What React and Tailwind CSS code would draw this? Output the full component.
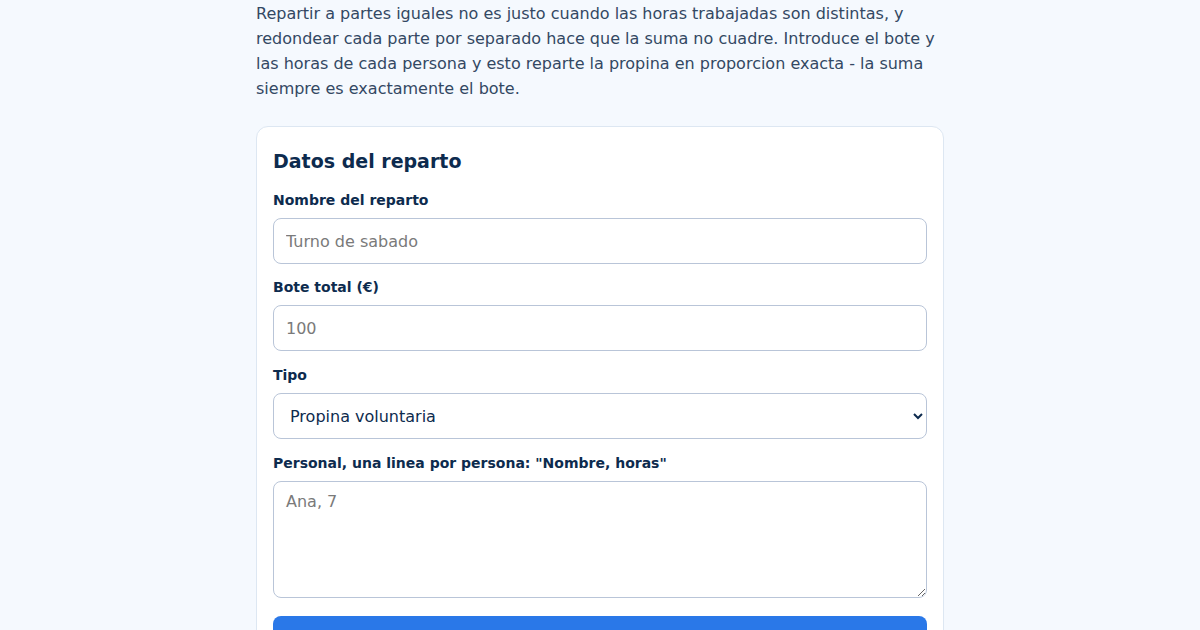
import React, { useState } from 'react';

const inputClass =
  'block w-full h-[46px] px-3 rounded-lg border border-[#b9c5d8] bg-white text-base text-[#0d2b4e] placeholder:text-[#7a7a7a] outline-none';

const Field = ({ label, className, children }) => (
  <div className={className}>
    <label className="block text-sm leading-[21px] font-bold text-[#0d2b4e] mb-[7px]">{label}</label>
    {children}
  </div>
);

const App = () => {
  const [nombre, setNombre] = useState('');
  const [bote, setBote] = useState('');
  const [tipo, setTipo] = useState('voluntaria');
  const [personal, setPersonal] = useState('');

  return (
    <div className="min-h-screen bg-[#f5f9fe] font-['DejaVu_Sans',sans-serif]">
      <div className="w-[688px] mx-auto">
        <p className="text-base leading-[25px] pt-px text-[#334863]">
          Repartir a partes iguales no es justo cuando las horas trabajadas son distintas, y redondear cada parte
          por separado hace que la suma no cuadre. Introduce el bote y las horas de cada persona y esto reparte la
          propina en proporcion exacta - la suma siempre es exactamente el bote.
        </p>

        <div className="mt-[25px] flex flex-col bg-white border border-[#dde7f2] rounded-xl px-4 pt-5 pb-5">
          <h2 className="text-[19px] leading-7 font-bold text-[#0d2b4e]">Datos del reparto</h2>

          <Field label="Nombre del reparto" className="mt-[15px]">
            <input
              className={inputClass}
              placeholder="Turno de sabado"
              value={nombre}
              onChange={(e) => setNombre(e.target.value)}
            />
          </Field>

          <Field label="Bote total (€)" className="mt-[13px]">
            <input
              className={inputClass}
              placeholder="100"
              inputMode="decimal"
              value={bote}
              onChange={(e) => setBote(e.target.value)}
            />
          </Field>

          <Field label="Tipo" className="mt-[14px]">
            <select className={inputClass} value={tipo} onChange={(e) => setTipo(e.target.value)}>
              <option value="voluntaria">Propina voluntaria</option>
              <option value="servicio">Cargo por servicio</option>
            </select>
          </Field>

          <Field label='Personal, una linea por persona: "Nombre, horas"' className="mt-[14px]">
            <textarea
              className="block w-full h-[117px] px-3 pt-2 pb-2 rounded-lg border border-[#b9c5d8] bg-white text-base text-[#0d2b4e] placeholder:text-[#7a7a7a] outline-none"
              placeholder="Ana, 7"
              value={personal}
              onChange={(e) => setPersonal(e.target.value)}
            />
          </Field>

          <button className="mt-[18px] w-full h-[50px] rounded-lg bg-[#2a78e8] text-white font-bold text-base">
            Calcular reparto
          </button>
        </div>
      </div>
    </div>
  );
};

export default App;
